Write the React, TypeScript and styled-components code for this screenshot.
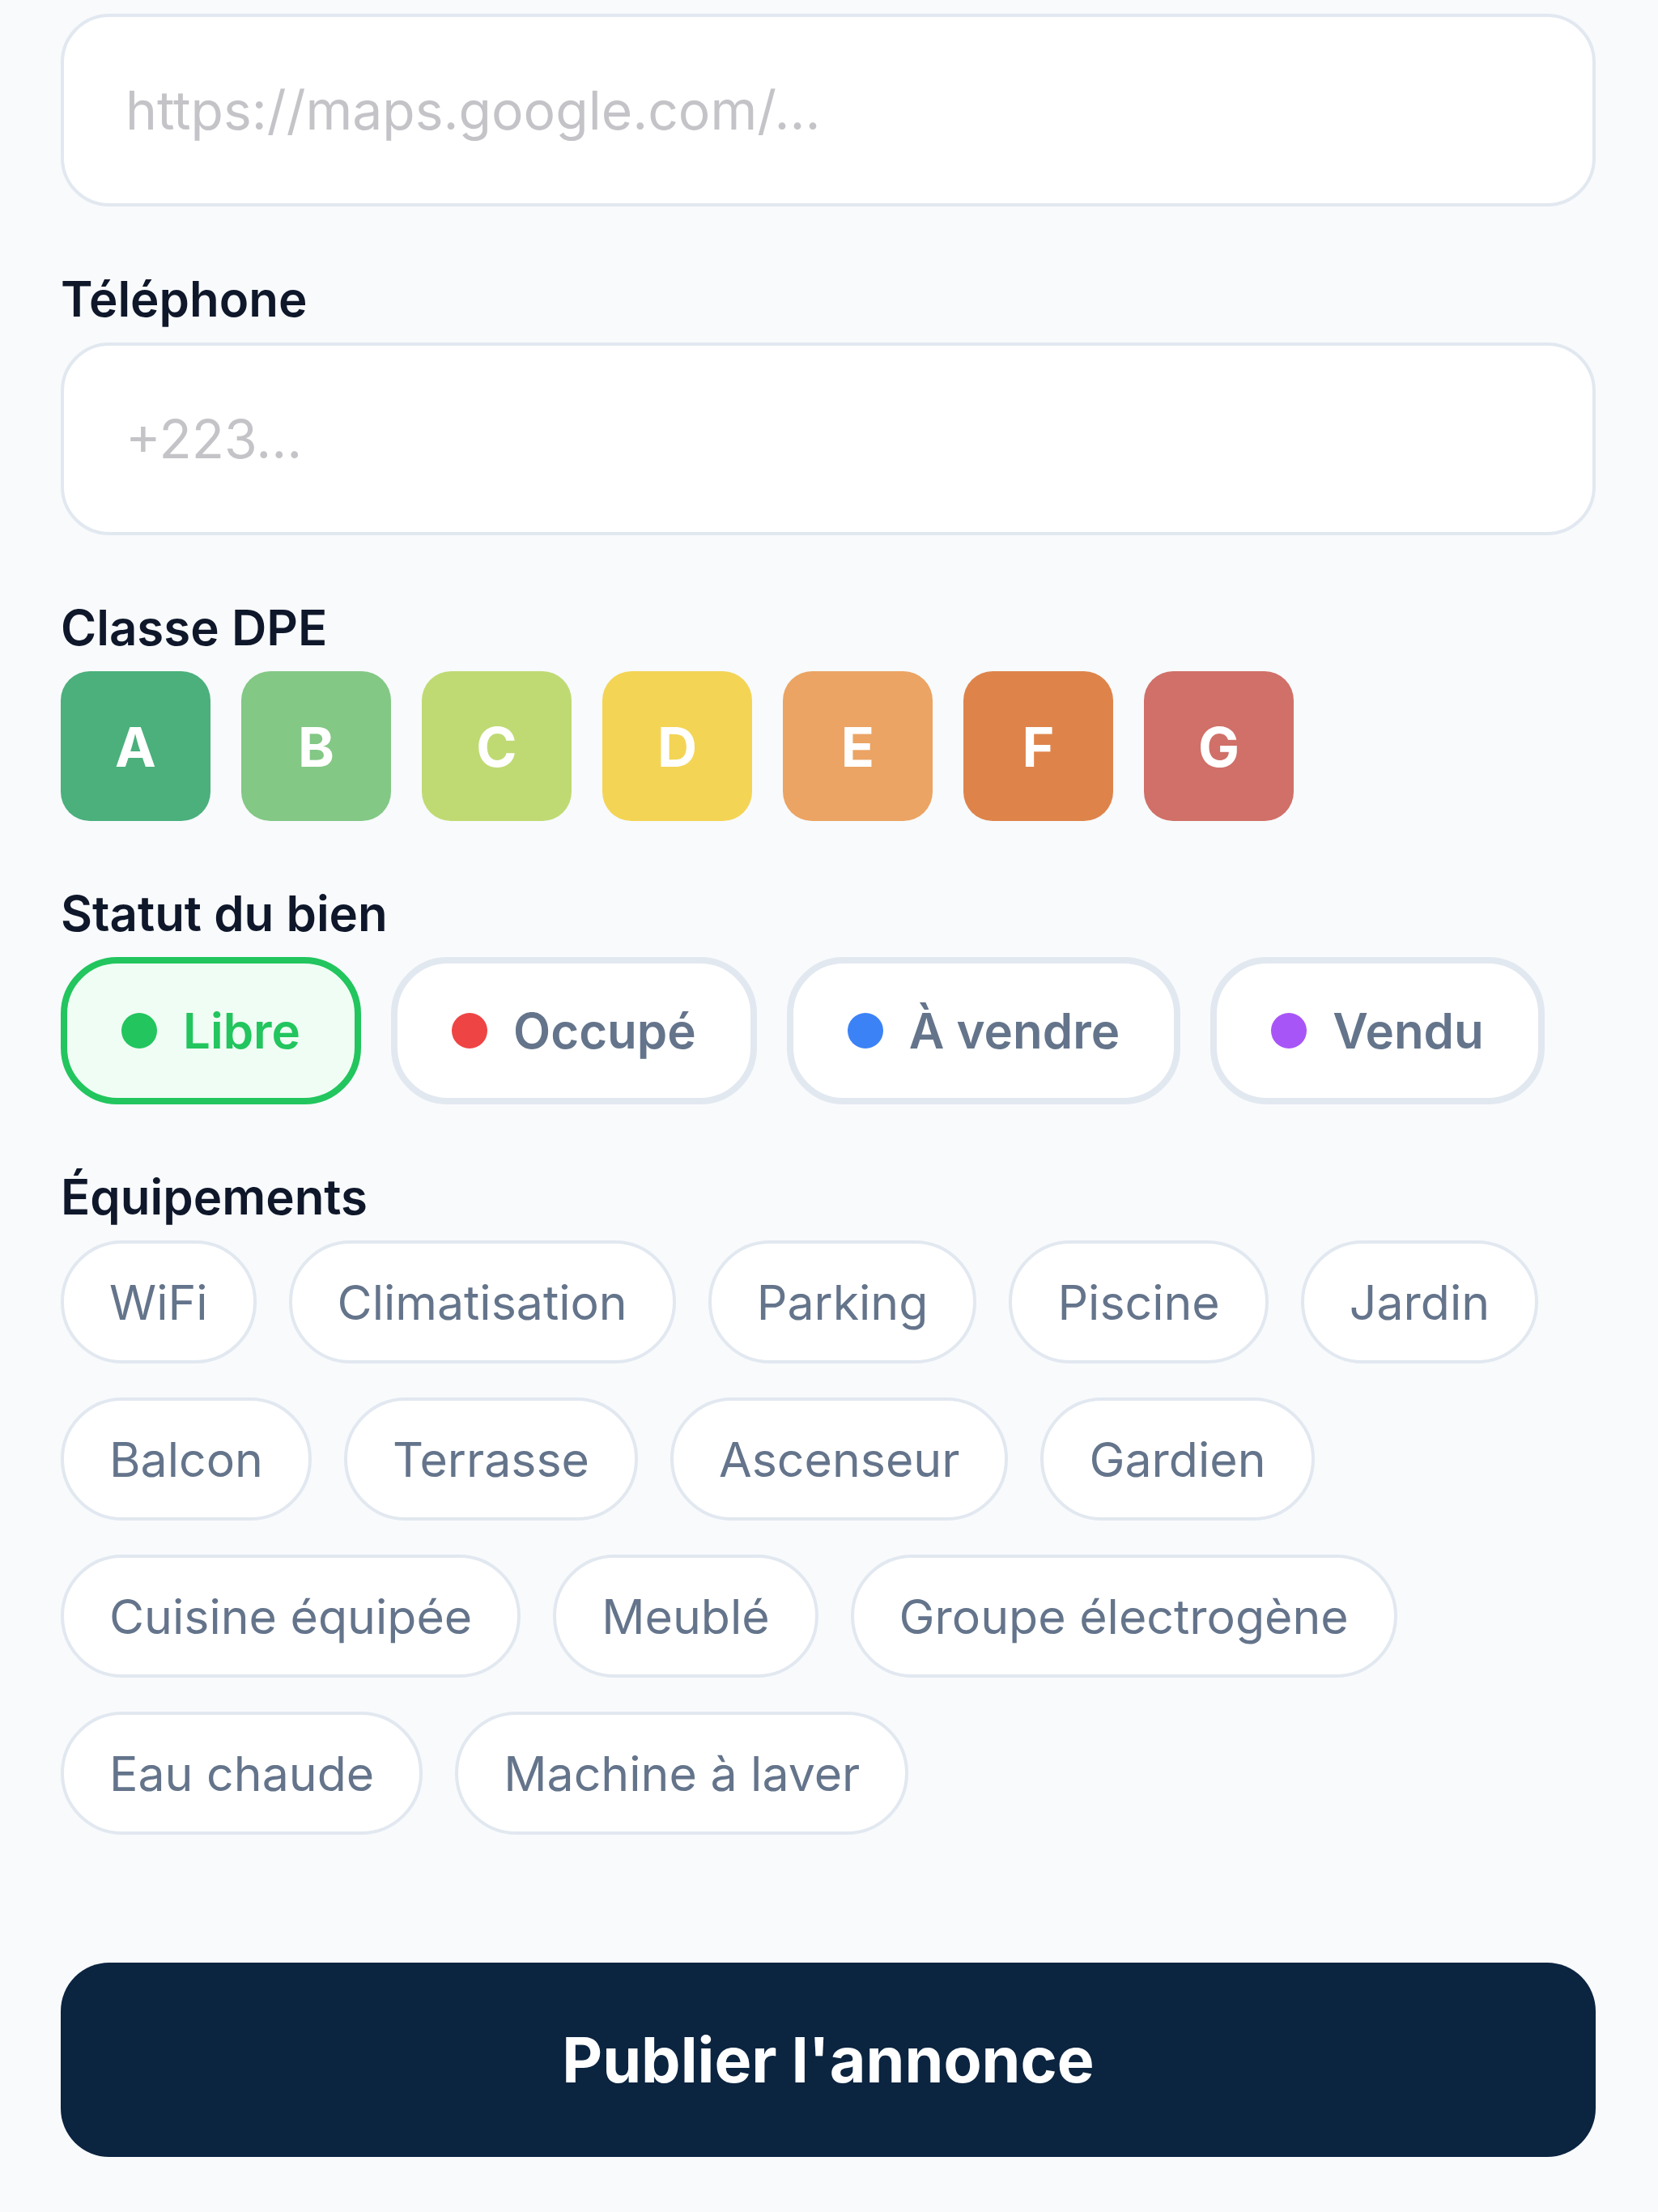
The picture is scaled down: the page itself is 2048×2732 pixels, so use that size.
import React, { useState } from 'react';
import styled, { createGlobalStyle } from 'styled-components';

const GlobalStyle = createGlobalStyle`
  html, body {
    margin: 0;
    padding: 0;
    background: #f8fafc;
  }
  body {
    font-family: Inter, "Noto Sans", sans-serif;
    -webkit-font-smoothing: antialiased;
  }
  * {
    box-sizing: border-box;
  }
`;

const Page = styled.div`
  width: 2048px;
  min-height: 2732px;
  padding: 17px 77px 60px 75px;
  background: #f8fafc;
`;

const Field = styled.div`
  display: flex;
  flex-direction: column;
  margin-bottom: 84px;
`;

const Label = styled.div`
  font-size: 60px;
  font-weight: 600;
  color: #0f172a;
  line-height: 1;
  margin-bottom: 24px;
`;

const TextInput = styled.input`
  height: 238px;
  width: 100%;
  border: 4px solid #e2e8f0;
  border-radius: 60px;
  background: #fff;
  padding: 0 76px;
  font-family: inherit;
  font-size: 66px;
  color: #0f172a;
  outline: none;

  &::placeholder {
    color: #c4c4c8;
  }
`;

const DpeRow = styled.div`
  display: flex;
  gap: 38px;
`;

const DpeBox = styled.button<{ $bg: string }>`
  width: 185px;
  height: 185px;
  border: none;
  border-radius: 36px;
  background: ${(p) => p.$bg};
  color: #fff;
  font-family: inherit;
  font-size: 68px;
  font-weight: 700;
  display: flex;
  align-items: center;
  justify-content: center;
  padding: 0;
`;

const StatusRow = styled.div`
  display: flex;
  gap: 37px;
`;

const StatusPill = styled.button<{ $active: boolean }>`
  height: 182px;
  display: flex;
  align-items: center;
  gap: 32px;
  padding: 0 67px;
  border-radius: 70px;
  border: 8px solid ${(p) => (p.$active ? '#22c55e' : '#e2e8f0')};
  background: ${(p) => (p.$active ? '#f0fdf4' : '#fff')};
  color: ${(p) => (p.$active ? '#22c55e' : '#64748b')};
  font-family: inherit;
  font-size: 60px;
  font-weight: 600;
`;

const Dot = styled.span<{ $color: string }>`
  width: 44px;
  height: 44px;
  border-radius: 50%;
  background: ${(p) => p.$color};
  flex-shrink: 0;
`;

const ChipWrap = styled.div`
  display: flex;
  flex-wrap: wrap;
  gap: 42px 40px;
`;

const Chip = styled.button`
  height: 152px;
  padding: 0 56px;
  border: 4px solid #e2e8f0;
  border-radius: 76px;
  background: #fff;
  color: #64748b;
  font-family: inherit;
  font-size: 59px;
  font-weight: 400;
`;

const Submit = styled.button`
  width: 100%;
  height: 240px;
  margin-top: 74px;
  border: none;
  border-radius: 60px;
  background: #0b2440;
  color: #fff;
  font-family: inherit;
  font-size: 77px;
  font-weight: 700;
`;

const dpe = [
  { l: 'A', c: '#4bb07c' },
  { l: 'B', c: '#83c885' },
  { l: 'C', c: '#bfda73' },
  { l: 'D', c: '#f3d455' },
  { l: 'E', c: '#eba464' },
  { l: 'F', c: '#de844b' },
  { l: 'G', c: '#d07068' },
];

const statuts = [
  { label: 'Libre', color: '#22c55e' },
  { label: 'Occupé', color: '#ef4444' },
  { label: 'À vendre', color: '#3b82f6' },
  { label: 'Vendu', color: '#a855f7' },
];

const equipements = [
  'WiFi',
  'Climatisation',
  'Parking',
  'Piscine',
  'Jardin',
  'Balcon',
  'Terrasse',
  'Ascenseur',
  'Gardien',
  'Cuisine équipée',
  'Meublé',
  'Groupe électrogène',
  'Eau chaude',
  'Machine à laver',
];

export default function App() {
  const [statut, setStatut] = useState('Libre');

  return (
    <Page>
      <GlobalStyle />
      <Field>
        <TextInput placeholder="https://maps.google.com/..." />
      </Field>

      <Field>
        <Label>Téléphone</Label>
        <TextInput placeholder="+223..." />
      </Field>

      <Field>
        <Label>Classe DPE</Label>
        <DpeRow>
          {dpe.map((d) => (
            <DpeBox key={d.l} $bg={d.c}>
              {d.l}
            </DpeBox>
          ))}
        </DpeRow>
      </Field>

      <Field>
        <Label>Statut du bien</Label>
        <StatusRow>
          {statuts.map((s) => (
            <StatusPill
              key={s.label}
              $active={statut === s.label}
              onClick={() => setStatut(s.label)}
            >
              <Dot $color={s.color} />
              {s.label}
            </StatusPill>
          ))}
        </StatusRow>
      </Field>

      <Field>
        <Label>Équipements</Label>
        <ChipWrap>
          {equipements.map((e) => (
            <Chip key={e}>{e}</Chip>
          ))}
        </ChipWrap>
      </Field>

      <Submit>Publier l'annonce</Submit>
    </Page>
  );
}
